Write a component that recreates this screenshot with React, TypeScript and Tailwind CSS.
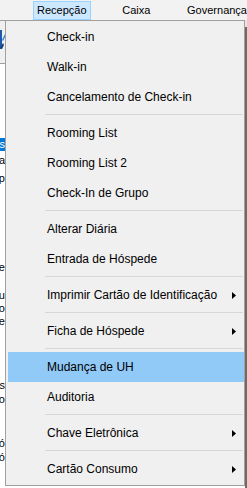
import React from 'react'

type Entry = { label: string; sub?: boolean; active?: boolean } | 'sep'

const entries: Entry[] = [
  { label: 'Check-in' },
  { label: 'Walk-in' },
  { label: 'Cancelamento de Check-in' },
  'sep',
  { label: 'Rooming List' },
  { label: 'Rooming List 2' },
  { label: 'Check-In de Grupo' },
  'sep',
  { label: 'Alterar Diária' },
  { label: 'Entrada de Hóspede' },
  'sep',
  { label: 'Imprimir Cartão de Identificação', sub: true },
  'sep',
  { label: 'Ficha de Hóspede', sub: true },
  'sep',
  { label: 'Mudança de UH', active: true },
  { label: 'Auditoria' },
  'sep',
  { label: 'Chave Eletrônica', sub: true },
  'sep',
  { label: 'Cartão Consumo', sub: true },
]

// pieces of the window behind the menu, only the last letter shows
const behind: { h: number; text?: string; cls?: string }[] = [
  { h: 7, cls: 'bg-[#f0f0f0]' },
  { h: 23, cls: 'bg-[#f0f0f0]', text: 'icon' },
  { h: 12, cls: 'bg-[#f0f0f0]' },
  { h: 1, cls: 'bg-[#a0a0a0]' },
  { h: 74, cls: 'bg-white' },
  { h: 13, cls: 'bg-[#0078d7] text-white', text: 'Reservas' },
  { h: 18, cls: 'bg-white', text: 'Diária' },
  { h: 18, cls: 'bg-white', text: 'Grup' },
  { h: 73, cls: 'bg-white' },
  { h: 14, cls: 'bg-white', text: 'Hóspede' },
  { h: 15, cls: 'bg-white' },
  { h: 13, cls: 'bg-white', text: 'Menu' },
  { h: 13, cls: 'bg-white', text: 'Quarto' },
  { h: 13, cls: 'bg-white', text: 'Hóspede' },
  { h: 50, cls: 'bg-white' },
  { h: 14, cls: 'bg-white', text: 'Reservas' },
  { h: 14, cls: 'bg-white', text: 'Quarto' },
  { h: 30, cls: 'bg-white' },
  { h: 14, cls: 'bg-white', text: 'Botó' },
  { h: 14, cls: 'bg-white', text: 'Botó' },
  { h: 40, cls: 'bg-white' },
]

function Arrow() {
  return (
    <svg width="4" height="7" viewBox="0 0 4 7" className="shrink-0">
      <polygon points="0,0 4,3.5 0,7" fill="#000" />
    </svg>
  )
}

export default function App() {
  return (
    <div
      className="w-[247px] h-[488px] overflow-hidden bg-white text-black flex flex-col"
      style={{ fontFamily: '"Liberation Sans", Arial, sans-serif' }}
    >
      {/* Menu bar */}
      <div className="h-[20px] shrink-0 bg-[#f2f2f2] flex items-start pt-[1px] pl-[33px] text-[11px] whitespace-nowrap">
        <div className="w-[61px] h-[19px] border border-[#99d1ff] bg-[#cce8ff] flex items-center pl-[3px] pb-[1px]">
          Recepção
        </div>
        <div className="w-[99px] h-[19px] flex items-center pl-[31px] pb-[1px]">Caixa</div>
        <div className="h-[19px] flex items-center pb-[1px]">Governança</div>
      </div>

      <div className="flex flex-1 min-h-0">
        {/* left sliver of the window behind */}
        <div className="w-[5px] shrink-0 flex flex-col border-t border-[#a0a0a0] text-[11px]">
          {behind.map((b, i) => (
            <div
              key={i}
              className={`shrink-0 flex justify-end items-center overflow-hidden whitespace-nowrap leading-none ${b.cls}`}
              style={{ height: b.h }}
            >
              {b.text === 'icon' ? (
                <svg width="5" height="23" viewBox="0 0 5 23" className="shrink-0">
                  <rect x="0" y="2" width="2" height="19" fill="#1e5aa8" />
                  <path d="M2 12 L5 6 L5 9 L3 13 Z" fill="#2d7fd8" />
                  <path d="M0 20 L3 15 L4 17 L2 21 Z" fill="#163f7a" />
                </svg>
              ) : (
                b.text
              )}
            </div>
          ))}
        </div>

        {/* Dropdown */}
        <div className="w-[240px] h-[466px] shrink-0 border border-[#a0a0a0] bg-[#f0f0f0] pl-[2px] pt-[1px] text-[12px]">
          {entries.map((e, i) =>
            e === 'sep' ? (
              <div key={i} className="h-[6px] pt-[2px] pl-[37px] pr-[1px]">
                <div className="h-px bg-[#d7d7d7]" />
              </div>
            ) : (
              <div
                key={i}
                className={`h-[30px] flex items-center justify-between pl-[39px] pr-[8px] whitespace-nowrap ${
                  e.active ? 'bg-[#91c9f7]' : ''
                }`}
              >
                <span>{e.label}</span>
                {e.sub && <Arrow />}
              </div>
            )
          )}
        </div>

        {/* right sliver */}
        <div className="w-[2px] shrink-0 flex flex-col">
          <div className="h-[7px] bg-[#e6e6e6]" />
          <div className="flex-1 bg-[#6e6a66]" />
        </div>
      </div>
    </div>
  )
}
